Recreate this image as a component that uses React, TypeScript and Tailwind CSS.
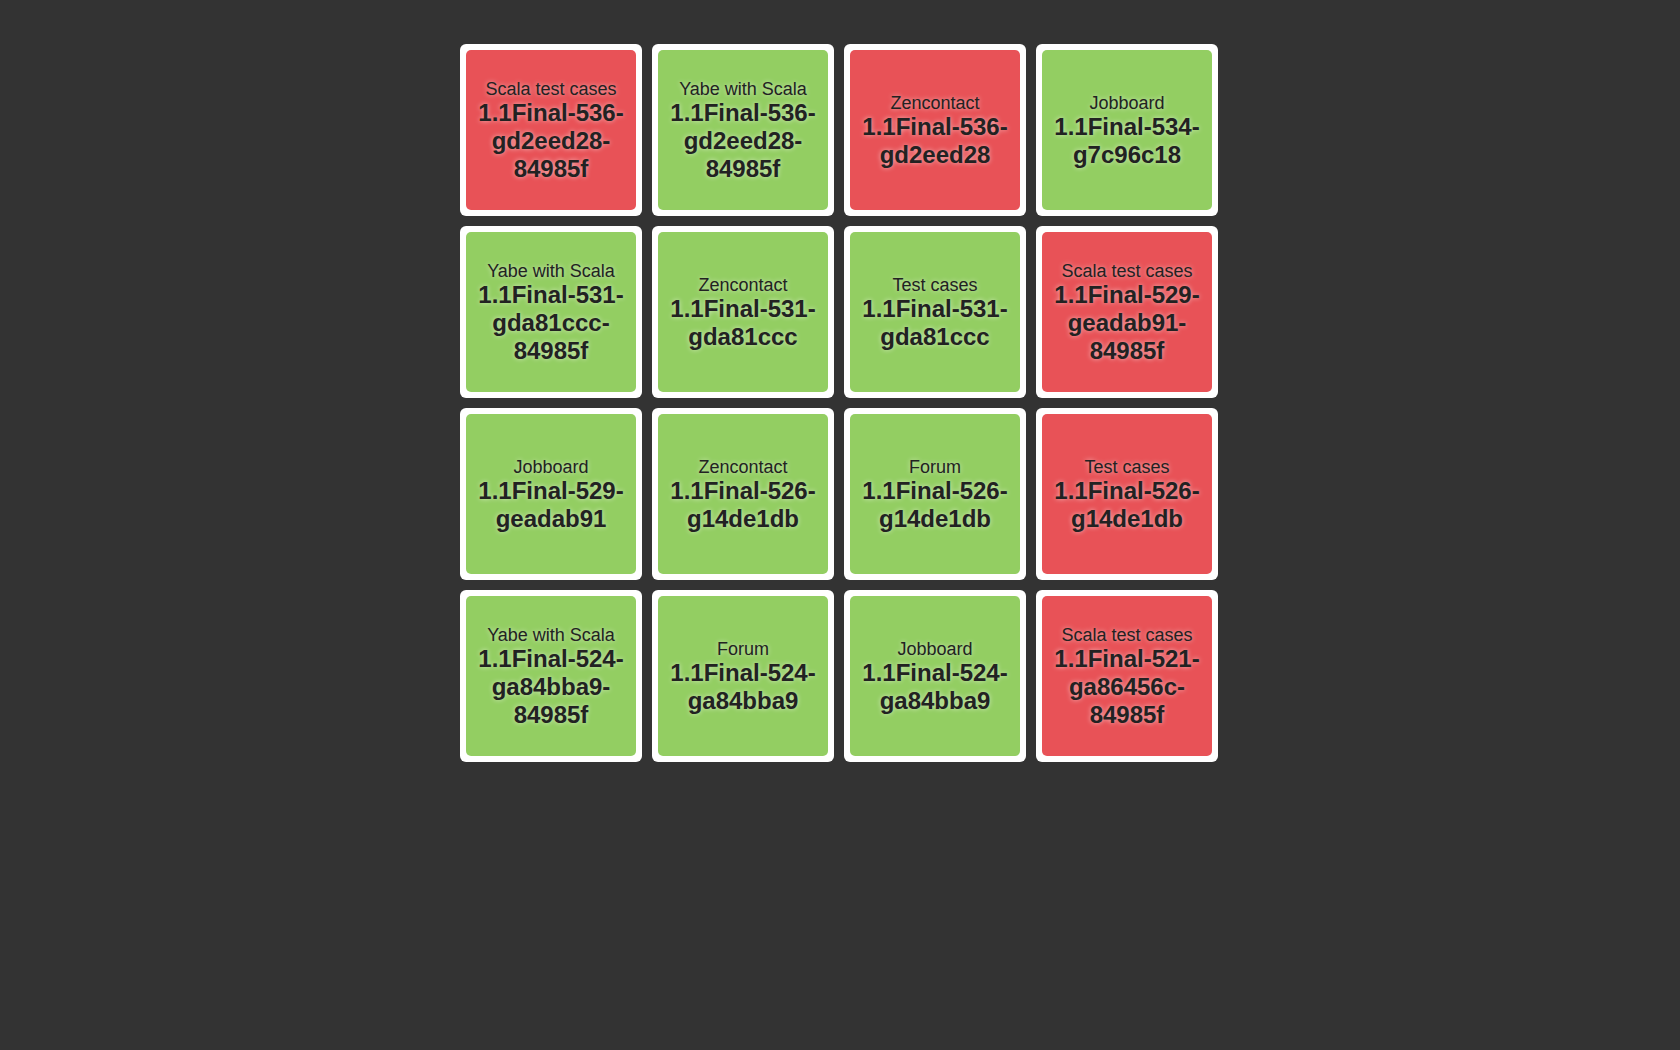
const builds = [
  { project: "Scala test cases", version: "1.1Final-536-gd2eed28-84985f", ok: false },
  { project: "Yabe with Scala", version: "1.1Final-536-gd2eed28-84985f", ok: true },
  { project: "Zencontact", version: "1.1Final-536-gd2eed28", ok: false },
  { project: "Jobboard", version: "1.1Final-534-g7c96c18", ok: true },
  { project: "Yabe with Scala", version: "1.1Final-531-gda81ccc-84985f", ok: true },
  { project: "Zencontact", version: "1.1Final-531-gda81ccc", ok: true },
  { project: "Test cases", version: "1.1Final-531-gda81ccc", ok: true },
  { project: "Scala test cases", version: "1.1Final-529-geadab91-84985f", ok: false },
  { project: "Jobboard", version: "1.1Final-529-geadab91", ok: true },
  { project: "Zencontact", version: "1.1Final-526-g14de1db", ok: true },
  { project: "Forum", version: "1.1Final-526-g14de1db", ok: true },
  { project: "Test cases", version: "1.1Final-526-g14de1db", ok: false },
  { project: "Yabe with Scala", version: "1.1Final-524-ga84bba9-84985f", ok: true },
  { project: "Forum", version: "1.1Final-524-ga84bba9", ok: true },
  { project: "Jobboard", version: "1.1Final-524-ga84bba9", ok: true },
  { project: "Scala test cases", version: "1.1Final-521-ga86456c-84985f", ok: false },
];

const Tile = ({ project, version, ok }: { project: string; version: string; ok: boolean }) => (
  <div className="rounded-[6px] bg-white p-[6px]">
    <div
      className={
        "flex h-[160px] w-[170px] flex-col items-center justify-center rounded-[5px] pt-[2px] text-center text-[#222] [text-shadow:0_0_5px_rgba(255,255,255,0.6)] " +
        (ok ? "bg-[#93ce62]" : "bg-[#e85257]")
      }
    >
      <div className="text-[18px] leading-[20px]">{project}</div>
      <div className="text-[24px] font-bold leading-[28px]">{version}</div>
    </div>
  </div>
);

export default function App() {
  return (
    <div
      className="min-h-screen bg-[#333333] pt-[44px]"
      style={{ fontFamily: '"Liberation Sans", Arial, sans-serif' }}
    >
      <div className="flex justify-center pr-[2px]">
        <div className="grid grid-cols-4 gap-[10px]">
          {builds.map((b, i) => (
            <Tile key={i} {...b} />
          ))}
        </div>
      </div>
    </div>
  );
}
